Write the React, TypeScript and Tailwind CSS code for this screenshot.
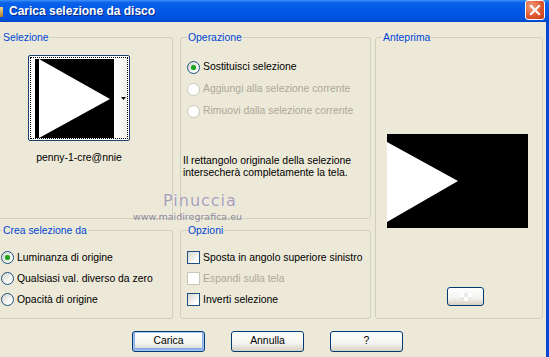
import React from "react";

const groupCls = "border border-[#d0d0bf] rounded-[3px] min-w-0";
const legendCls = "px-[1px] leading-[13px] text-[#0046d5]";

const Radio = ({ checked = false, disabled = false }: { checked?: boolean; disabled?: boolean }) => (
  <span
    className={
      disabled
        ? "w-[13px] h-[13px] shrink-0 rounded-full border border-[#cac8bb] bg-white"
        : "w-[13px] h-[13px] shrink-0 rounded-full border border-[#1c5180] bg-[linear-gradient(135deg,#d6d5cc,#ffffff_80%)] flex items-center justify-center"
    }
  >
    {checked && <span className="w-[5px] h-[5px] rounded-full bg-[#21a121] shadow-[0_0_1px_#5fd35f]" />}
  </span>
);

const Check = ({ disabled = false }: { disabled?: boolean }) => (
  <span
    className={
      disabled
        ? "w-[13px] h-[13px] shrink-0 border border-[#cac8bb] bg-white"
        : "w-[13px] h-[13px] shrink-0 border border-[#1c5180] bg-[linear-gradient(135deg,#d6d5cc,#ffffff_80%)]"
    }
  />
);

const Option = ({ children, disabled = false, h = "h-[22px]" }: { children: React.ReactNode; disabled?: boolean; h?: string }) => (
  <div className={`${h} flex items-center gap-[3px] whitespace-nowrap ${disabled ? "text-[#aca899]" : ""}`}>{children}</div>
);

const XpButton = ({ label, focused = false }: { label: string; focused?: boolean }) => (
  <button
    className={
      "w-[73px] h-[21px] rounded-[3px] border border-[#003c74] bg-[linear-gradient(to_bottom,#ffffff,#f3f3ef_60%,#d6d0c5)] leading-none " +
      (focused ? "shadow-[inset_0_0_0_1px_#a9c5f0,inset_0_-1px_0_2px_#89adeb]" : "")
    }
  >
    {label}
  </button>
);

export default function App() {
  return (
    <div className="relative w-[549px] h-[357px] flex flex-col overflow-hidden font-['Liberation_Sans',Arial,sans-serif] text-[10.4px] text-black">
      {/* title bar */}
      <div className="h-[22px] shrink-0 flex items-center bg-[linear-gradient(to_bottom,#3d8ff8_0%,#0a62ea_12%,#0058e6_50%,#0052de_85%,#0045c8_100%)]">
        <span className="w-[3px] h-[10px] mt-[1px] bg-[linear-gradient(to_bottom,#f2d58a,#b07a2a)]" />
        <span className="ml-[6px] text-white font-bold text-[12px] [text-shadow:1px_1px_0_#0a2a8a]">
          Carica selezione da disco
        </span>
        <span className="ml-auto mr-[4px] mb-[2px] w-[20px] h-[20px] rounded-[3px] border border-white bg-[radial-gradient(circle_at_30%_30%,#f0a080,#e0582f_55%,#c43c14)] flex items-center justify-center">
          <svg width="12" height="12" viewBox="0 0 12 12">
            <path d="M2 2 L10 10 M10 2 L2 10" stroke="white" strokeWidth="2.2" strokeLinecap="square" />
          </svg>
        </span>
      </div>

      {/* body */}
      <div className="flex-1 flex flex-col bg-[#ece9d8] border-r-[3px] border-[#0b46d4]">
        <div className="flex pt-[9px]">
          <div className="w-[371px] flex flex-col gap-[5px]">
            <div className="flex gap-[7px] h-[188px]">
              <fieldset className={`${groupCls} w-[173px] border-l-0 rounded-l-none`}>
                <legend className={`${legendCls} ml-[2px]`}>Selezione</legend>
                <div className="ml-[28px] mt-[11px] w-[102px] h-[86px] rounded-[2px] border border-[#1c3f6e] bg-white p-[1px]">
                  <div className="h-full border border-dotted border-black flex pl-[4px]">
                    <svg width="79" height="79" viewBox="0 0 79 79" className="shrink-0 mt-[1px]">
                      <rect width="79" height="79" fill="#000" />
                      <polygon points="4,0 75,40 4,79" fill="#fff" />
                    </svg>
                    <div className="flex-1 flex items-center justify-end pr-[1px] bg-[linear-gradient(to_right,#ffffff,#f0f0ec)]">
                      <svg width="5" height="3" viewBox="0 0 5 3">
                        <polygon points="0,0 5,0 2.5,3" fill="#000" />
                      </svg>
                    </div>
                  </div>
                </div>
                <div className="ml-[28px] w-[102px] mt-[10px] leading-[13px] text-center">penny-1-cre@nnie</div>
              </fieldset>

              <fieldset className={`${groupCls} w-[191px]`}>
                <legend className={`${legendCls} ml-[6px]`}>Operazione</legend>
                <div className="mt-[12px] pl-[6px]">
                  <Option>
                    <Radio checked />
                    Sostituisci selezione
                  </Option>
                  <Option disabled>
                    <Radio disabled />
                    Aggiungi alla selezione corrente
                  </Option>
                  <Option disabled>
                    <Radio disabled />
                    Rimuovi dalla selezione corrente
                  </Option>
                </div>
                <p className="mt-[33px] pl-[2px] leading-[12px]">
                  Il rettangolo originale della selezione
                  <br />
                  intersecherà completamente la tela.
                </p>
              </fieldset>
            </div>

            <div className="flex gap-[7px] h-[95px]">
              <fieldset className={`${groupCls} w-[173px] border-l-0 rounded-l-none`}>
                <legend className={`${legendCls} ml-[2px]`}>Crea selezione da</legend>
                <div className="mt-[10px] pl-[1px]">
                  <Option h="h-[21px]">
                    <Radio checked />
                    Luminanza di origine
                  </Option>
                  <Option h="h-[21px]">
                    <Radio />
                    Qualsiasi val. diverso da zero
                  </Option>
                  <Option h="h-[21px]">
                    <Radio />
                    Opacità di origine
                  </Option>
                </div>
              </fieldset>

              <fieldset className={`${groupCls} w-[191px]`}>
                <legend className={`${legendCls} ml-[6px]`}>Opzioni</legend>
                <div className="mt-[10px] pl-[6px]">
                  <Option h="h-[21px]">
                    <Check />
                    Sposta in angolo superiore sinistro
                  </Option>
                  <Option h="h-[21px]" disabled>
                    <Check disabled />
                    Espandi sulla tela
                  </Option>
                  <Option h="h-[21px]">
                    <Check />
                    Inverti selezione
                  </Option>
                </div>
              </fieldset>
            </div>
          </div>

          <fieldset className={`${groupCls} ml-[4px] w-[168px] h-[288px]`}>
            <legend className={`${legendCls} ml-[6px]`}>Anteprima</legend>
            <svg width="141" height="94" viewBox="0 0 141 94" className="ml-[11px] mt-[90px] block">
              <rect width="141" height="94" fill="#000" />
              <polygon points="0,8 71,47 0,88" fill="#fff" />
            </svg>
            <div className="ml-[71px] mt-[59px] w-[37px] h-[19px] rounded-[3px] border border-[#003c74] bg-[linear-gradient(to_bottom,#ffffff,#f3f3ef_60%,#d6d0c5)] flex items-center justify-center">
              <div className="grid grid-cols-3 w-[12px] h-[8px] opacity-90">
                <span className="bg-white" />
                <span className="bg-[#e8e8e4]" />
                <span className="bg-white" />
                <span className="bg-[#e8e8e4]" />
                <span className="bg-white" />
                <span className="bg-[#e8e8e4]" />
              </div>
            </div>
          </fieldset>
        </div>

        <div className="flex gap-[26px] pl-[132px] mt-[12px]">
          <XpButton label="Carica" focused />
          <XpButton label="Annulla" />
          <XpButton label="?" />
        </div>
      </div>

      {/* watermark */}
      <div className="absolute left-[163px] top-[189px] font-['DejaVu_Sans',sans-serif] text-[16px] tracking-[1px] text-[#a59db7] [text-shadow:0_0_1px_#ffffff] pointer-events-none">
        Pinuccia
      </div>
      <div className="absolute left-[133px] top-[210px] font-['DejaVu_Sans',sans-serif] text-[9.5px] text-[#8c8aa0] pointer-events-none">
        www.maidiregrafica.eu
      </div>
    </div>
  );
}
